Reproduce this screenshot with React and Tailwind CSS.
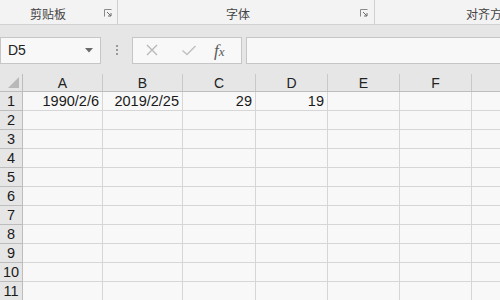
import React from "react";

const cols = [
  { name: "A", w: "w-[80px]" },
  { name: "B", w: "w-[80px]" },
  { name: "C", w: "w-[73px]" },
  { name: "D", w: "w-[72px]" },
  { name: "E", w: "w-[72px]" },
  { name: "F", w: "w-[72px]" },
  { name: "G", w: "w-[72px]" },
];

const data = { 1: ["1990/2/6", "2019/2/25", "29", "19", "", "", ""] };

const Launcher = () => (
  <svg width="8" height="8" viewBox="0 0 8 8" className="mb-[3px]">
    <path d="M0.5 7.5V0.5H7.5" fill="none" stroke="#8a8a8a" strokeWidth="1" />
    <path d="M3 3L7 7M7 4V7H4" fill="none" stroke="#6a6a6a" strokeWidth="1" />
  </svg>
);

const App = () => {
  const rows = Array.from({ length: 11 }, (_, i) => i + 1);

  return (
    <div className="w-[500px] h-[300px] overflow-hidden bg-[#e6e6e6] font-['Liberation_Sans',sans-serif]">
      {/* Ribbon group labels */}
      <div className="flex h-[25px] bg-[#f3f3f3] border-b border-[#d2d2d2] text-[12px] text-[#444] font-['Noto_Sans_CJK_SC',sans-serif]">
        <div className="w-[118px] shrink-0 flex items-end justify-between pl-[30px] pr-[5px] pb-[4px] border-r border-[#cfcfcf]">
          <span className="leading-none">剪贴板</span>
          <Launcher />
        </div>
        <div className="w-[257px] shrink-0 flex items-end justify-between pl-[108px] pr-[6px] pb-[4px] border-r border-[#cfcfcf]">
          <span className="leading-none">字体</span>
          <Launcher />
        </div>
        <div className="flex-1 min-w-0 flex items-end pl-[91px] pb-[4px] whitespace-nowrap overflow-hidden">
          <span className="leading-none">对齐方式</span>
        </div>
      </div>

      {/* Formula bar */}
      <div className="flex items-center h-[49px] pt-[1px]">
        <div className="w-[101px] shrink-0 h-[27px] flex items-center justify-between pl-[7px] pr-[7px] bg-[#f8f8f8] border border-[#c6c6c6] text-[14px] text-[#222]">
          <span>D5</span>
          <svg width="8" height="5" viewBox="0 0 8 5">
            <path d="M0 0H8L4 4.5Z" fill="#6a6a6a" />
          </svg>
        </div>
        <div className="w-[31px] shrink-0 flex flex-col items-center gap-[2px]">
          <span className="w-[2px] h-[2px] bg-[#9a9a9a]" />
          <span className="w-[2px] h-[2px] bg-[#9a9a9a]" />
          <span className="w-[2px] h-[2px] bg-[#9a9a9a]" />
        </div>
        <div className="w-[110px] shrink-0 h-[27px] flex items-center bg-[#f8f8f8] border border-[#c6c6c6]">
          <svg width="14" height="14" viewBox="0 0 14 14" className="ml-[12px]">
            <path d="M2 2L12 12M12 2L2 12" stroke="#b8b8b8" strokeWidth="1.4" />
          </svg>
          <svg width="16" height="14" viewBox="0 0 16 14" className="ml-[22px]">
            <path d="M1.5 7.5L6 11.5L14.5 3" fill="none" stroke="#c2c2c2" strokeWidth="1.6" />
          </svg>
          <span className="ml-[17px] text-[17px] italic text-[#5a5a5a] font-['Liberation_Serif',serif] leading-none">
            f<span className="text-[13px]">x</span>
          </span>
        </div>
        <div className="ml-[4px] flex-1 h-[27px] bg-[#f8f8f8] border-y border-l border-[#c6c6c6]" />
      </div>

      {/* Column headers */}
      <div className="flex h-[18px] bg-[#e6e6e6] border-b border-[#bdbdbd] text-[14px] text-[#222]">
        <div className="w-[23px] shrink-0 flex items-end justify-end pr-[3px] pb-[3px] border-r border-[#bdbdbd]">
          <svg width="11" height="11" viewBox="0 0 11 11">
            <path d="M11 0V11H0Z" fill="#b9b9b9" />
          </svg>
        </div>
        {cols.map((c) => (
          <div
            key={c.name}
            className={`${c.w} shrink-0 flex items-center justify-center border-r border-[#c9c9c9] leading-none`}
          >
            {c.name}
          </div>
        ))}
      </div>

      {/* Grid rows */}
      {rows.map((r) => (
        <div key={r} className="flex h-[19px] text-[14.5px] text-[#1a1a1a]">
          <div className="w-[23px] shrink-0 flex items-center justify-center bg-[#e6e6e6] border-r border-b border-[#bdbdbd] leading-none">
            {r}
          </div>
          {cols.map((c, i) => (
            <div
              key={c.name}
              className={`${c.w} shrink-0 flex items-center justify-end pr-[3px] bg-[#f8f8f8] border-r border-b border-[#d6d6d6] leading-none`}
            >
              {data[r] ? data[r][i] : ""}
            </div>
          ))}
        </div>
      ))}
    </div>
  );
};

export default App;
